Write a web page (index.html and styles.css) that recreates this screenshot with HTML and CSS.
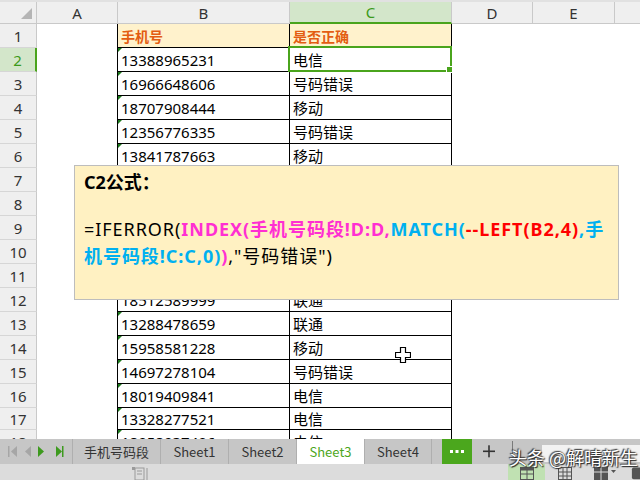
FILE: index.html
```html
<!DOCTYPE html>
<html>
<head>
<meta charset="utf-8">
<link rel="stylesheet" href="styles.css">
</head>
<body>
<div class="app">
  <div class="top"></div>
  <div class="sheet">
    <div class="row hdr">
      <div class="c rh corner"><span class="tri"></span></div>
      <div class="c a">A</div>
      <div class="c b">B</div>
      <div class="c cc sel-h">C</div>
      <div class="c d">D</div>
      <div class="c e">E</div>
      <div class="c f"></div>
    </div>
    <div class="row">
      <div class="c rh">1</div><div class="c a tl"></div>
      <div class="c b th">手机号</div><div class="c cc th">是否正确</div>
      <div class="c d"></div><div class="c e"></div><div class="c f"></div>
    </div>
    <div class="row">
      <div class="c rh sel-r">2</div><div class="c a tl"></div>
      <div class="c b num">13388965231</div><div class="c cc">电信</div>
      <div class="c d"></div><div class="c e"></div><div class="c f"></div>
    </div>
    <div class="row">
      <div class="c rh">3</div><div class="c a tl"></div>
      <div class="c b num">16966648606</div><div class="c cc">号码错误</div>
      <div class="c d"></div><div class="c e"></div><div class="c f"></div>
    </div>
    <div class="row">
      <div class="c rh">4</div><div class="c a tl"></div>
      <div class="c b num">18707908444</div><div class="c cc">移动</div>
      <div class="c d"></div><div class="c e"></div><div class="c f"></div>
    </div>
    <div class="row">
      <div class="c rh">5</div><div class="c a tl"></div>
      <div class="c b num">12356776335</div><div class="c cc">号码错误</div>
      <div class="c d"></div><div class="c e"></div><div class="c f"></div>
    </div>
    <div class="row">
      <div class="c rh">6</div><div class="c a tl"></div>
      <div class="c b num">13841787663</div><div class="c cc">移动</div>
      <div class="c d"></div><div class="c e"></div><div class="c f"></div>
    </div>
    <div class="row">
      <div class="c rh">7</div><div class="c a tl"></div>
      <div class="c b num">15537269061</div><div class="c cc">联通</div>
      <div class="c d"></div><div class="c e"></div><div class="c f"></div>
    </div>
    <div class="row">
      <div class="c rh">8</div><div class="c a tl"></div>
      <div class="c b num">13912378420</div><div class="c cc">移动</div>
      <div class="c d"></div><div class="c e"></div><div class="c f"></div>
    </div>
    <div class="row">
      <div class="c rh">9</div><div class="c a tl"></div>
      <div class="c b num">17755126398</div><div class="c cc">电信</div>
      <div class="c d"></div><div class="c e"></div><div class="c f"></div>
    </div>
    <div class="row">
      <div class="c rh">10</div><div class="c a tl"></div>
      <div class="c b num">11086342217</div><div class="c cc">号码错误</div>
      <div class="c d"></div><div class="c e"></div><div class="c f"></div>
    </div>
    <div class="row">
      <div class="c rh">11</div><div class="c a tl"></div>
      <div class="c b num">15623897415</div><div class="c cc">联通</div>
      <div class="c d"></div><div class="c e"></div><div class="c f"></div>
    </div>
    <div class="row">
      <div class="c rh">12</div><div class="c a tl"></div>
      <div class="c b num">18512589999</div><div class="c cc">联通</div>
      <div class="c d"></div><div class="c e"></div><div class="c f"></div>
    </div>
    <div class="row">
      <div class="c rh">13</div><div class="c a tl"></div>
      <div class="c b num">13288478659</div><div class="c cc">联通</div>
      <div class="c d"></div><div class="c e"></div><div class="c f"></div>
    </div>
    <div class="row">
      <div class="c rh">14</div><div class="c a tl"></div>
      <div class="c b num">15958581228</div><div class="c cc">移动</div>
      <div class="c d"></div><div class="c e"></div><div class="c f"></div>
    </div>
    <div class="row">
      <div class="c rh">15</div><div class="c a tl"></div>
      <div class="c b num">14697278104</div><div class="c cc">号码错误</div>
      <div class="c d"></div><div class="c e"></div><div class="c f"></div>
    </div>
    <div class="row">
      <div class="c rh">16</div><div class="c a tl"></div>
      <div class="c b num">18019409841</div><div class="c cc">电信</div>
      <div class="c d"></div><div class="c e"></div><div class="c f"></div>
    </div>
    <div class="row short">
      <div class="c rh">17</div><div class="c a tl"></div>
      <div class="c b num">13328277521</div><div class="c cc">电信</div>
      <div class="c d"></div><div class="c e"></div><div class="c f"></div>
    </div>
    <div class="row">
      <div class="c rh">18</div><div class="c a tl"></div>
      <div class="c b num">18958937406</div><div class="c cc">电信</div>
      <div class="c d"></div><div class="c e"></div><div class="c f"></div>
    </div>
  </div>

  <div class="tabbar">
    <div class="nav">
      <svg width="73" height="25" viewBox="0 0 73 25">
        <rect x="8" y="7" width="1.5" height="11" fill="#a6a6a6"/>
        <polygon points="17,7 17,18 11,12.5" fill="#a6a6a6"/>
        <polygon points="31,7 31,18 25,12.5" fill="#a6a6a6"/>
        <polygon points="38,7 38,18 44,12.5" fill="#3d9a1e"/>
        <polygon points="56,7 56,18 62,12.5" fill="#3d9a1e"/>
        <rect x="62" y="7" width="1.5" height="11" fill="#3d9a1e"/>
      </svg>
    </div>
    <div class="tab w88">手机号码段</div>
    <div class="tab w68">Sheet1</div>
    <div class="tab w68">Sheet2</div>
    <div class="tab w68 active">Sheet3</div>
    <div class="tab w67">Sheet4</div>
    <div class="more">
      <svg width="30" height="25" viewBox="0 0 30 25">
        <rect x="8" y="11" width="3" height="3" fill="#fff"/>
        <rect x="13.5" y="11" width="3" height="3" fill="#fff"/>
        <rect x="19" y="11" width="3" height="3" fill="#fff"/>
      </svg>
    </div>
    <div class="plus">
      <svg width="34" height="25" viewBox="0 0 34 25">
        <rect x="11" y="11.5" width="12" height="1.6" fill="#333"/>
        <rect x="16.2" y="6.3" width="1.6" height="12" fill="#333"/>
      </svg>
    </div>
    <div class="vsep"></div>
    <div class="scroll"></div>
  </div>
  <div class="status">
    <div class="st-doc">
      <svg width="18" height="16" viewBox="0 0 18 16">
        <rect x="2" y="3" width="3" height="3" fill="#9a9a9a"/>
        <rect x="5" y="4" width="9" height="12" fill="none" stroke="#9a9a9a"/>
        <line x1="7" y1="7" x2="12" y2="7" stroke="#9a9a9a"/>
        <line x1="7" y1="10" x2="12" y2="10" stroke="#9a9a9a"/>
        <line x1="17" y1="4" x2="17" y2="16" stroke="#9a9a9a"/>
      </svg>
    </div>
    <div class="st-right">
      <div class="st-on">
        <svg width="16" height="16" viewBox="0 0 16 16">
          <rect x="1.5" y="3.5" width="13" height="12" fill="none" stroke="#555"/>
          <rect x="1.5" y="3.5" width="13" height="3" fill="#555"/>
          <line x1="1" y1="10" x2="15" y2="10" stroke="#555"/>
          <line x1="8" y1="4" x2="8" y2="16" stroke="#555"/>
        </svg>
      </div>
      <div class="st-ic">
        <svg width="16" height="16" viewBox="0 0 16 16">
          <rect x="1.5" y="3.5" width="13" height="12" fill="none" stroke="#555"/>
          <line x1="6" y1="4" x2="6" y2="16" stroke="#555"/>
          <line x1="10" y1="4" x2="10" y2="16" stroke="#555"/>
          <line x1="1" y1="8" x2="15" y2="8" stroke="#555"/>
          <line x1="1" y1="12" x2="15" y2="12" stroke="#555"/>
        </svg>
      </div>
      <div class="st-ic wide">
        <svg width="24" height="16" viewBox="0 0 24 16">
          <rect x="1" y="3" width="14" height="13" fill="#555"/>
          <line x1="8" y1="3" x2="8" y2="16" stroke="#ddd"/>
          <line x1="1" y1="8" x2="15" y2="8" stroke="#ddd"/>
          <polygon points="18,6 23,6 20.5,9" fill="#555"/>
        </svg>
      </div>
      <div class="st-ic last">
        <svg width="10" height="16" viewBox="0 0 10 16">
          <rect x="1" y="3" width="12" height="13" rx="2" fill="#555"/>
        </svg>
      </div>
    </div>
  </div>

  <div class="selbox"><span class="handle"></span></div>

  <div class="popup">
    <div class="ptitle">C2公式：</div>
    <div class="formula"><span class="k">=IFERROR(</span><span class="m">INDEX(手机号码段!D:D,</span><span class="cy">MATCH(</span><span class="r">--LEFT(B2,4)</span><span class="cy">,手</span><br><span class="cy">机号码段!C:C,0)</span><span class="m">)</span><span class="k">,"号码错误")</span></div>
  </div>

  <svg class="cursor" width="16" height="16" viewBox="0 0 16 16">
    <polygon points="5.5,0.5 10.5,0.5 10.5,5.5 15.5,5.5 15.5,10.5 10.5,10.5 10.5,15.5 5.5,15.5 5.5,10.5 0.5,10.5 0.5,5.5 5.5,5.5" fill="#fff" stroke="#000" stroke-width="1.2"/>
  </svg>

  <div class="watermark">头条 @解晴新生</div>
</div>
</body>
</html>
```
FILE: styles.css
```css
html, body {
  margin: 0;
  padding: 0;
}
body {
  width: 640px;
  height: 480px;
  overflow: hidden;
  background: #fff;
  font-family: "Noto Sans", "Noto Sans CJK SC", sans-serif;
}
.app {
  position: relative;
  width: 640px;
  height: 480px;
  display: flex;
  flex-direction: column;
  overflow: hidden;
}
.top {
  height: 2px;
  flex: none;
  background: #e1e1e1;
}
.sheet {
  height: 437px;
  flex: none;
  overflow: hidden;
}
.row {
  display: flex;
  height: 24px;
}
.row.short {
  height: 22px;
}
.c {
  box-sizing: border-box;
  flex: none;
  height: 100%;
  display: flex;
  align-items: center;
  font-size: 15px;
  color: #000;
  white-space: nowrap;
  position: relative;
}
.rh {
  width: 37px;
  background: #efefef;
  border-right: 1px solid #c9c9c9;
  border-bottom: 1px solid #d6d6d6;
  justify-content: center;
  color: #333;
  font-size: 15px;
}
.a { width: 81px; }
.b { width: 172px; padding-left: 3px; border-right: 1px solid #000; border-bottom: 1px solid #000; }
.cc { width: 162px; padding-left: 3px; border-right: 1px solid #000; border-bottom: 1px solid #000; font-family: "Noto Sans CJK SC", sans-serif; }
.d { width: 81px; }
.e { width: 82px; }
.f { width: 40px; }
.tl { border-right: 1px solid #000; }

.hdr {
  height: 22px;
}
.hdr .c {
  background: #efefef;
  border-right: 1px solid #c9c9c9;
  border-bottom: 1px solid #c9c9c9;
  justify-content: center;
  color: #333;
  padding-left: 0;
  font-size: 15px;
  font-family: "Noto Sans", sans-serif;
}
.hdr .sel-h {
  background: #d3e6ca;
  color: #3c9a1a;
  border-bottom: 2px solid #4aa41c;
}
.corner .tri {
  position: absolute;
  left: 21px;
  top: 6px;
  width: 0;
  height: 0;
  border-left: 11px solid transparent;
  border-bottom: 11px solid #b5b5b5;
}
.rh.sel-r {
  background: #d3e6ca;
  color: #3c9a1a;
  border-right: 2px solid #4aa41c;
}
.th {
  background: #fff2cc;
  color: #e35d12;
  font-weight: bold;
  font-size: 14px;
  font-family: "Noto Sans CJK SC", sans-serif;
}
.num::before {
  content: "";
  position: absolute;
  left: 0;
  top: 0;
  width: 0;
  height: 0;
  border-top: 4px solid #1e7b1e;
  border-right: 4px solid transparent;
}

.tabbar {
  height: 25px;
  flex: none;
  display: flex;
  align-items: stretch;
  background: #c6c6c6;
}
.nav {
  width: 73px;
  flex: none;
  box-sizing: border-box;
  border-right: 1px solid #afafaf;
}
.nav svg, .more svg, .plus svg { display: block; }
.tab {
  box-sizing: border-box;
  flex: none;
  display: flex;
  align-items: center;
  justify-content: center;
  border-right: 1px solid #afafaf;
  font-size: 13px;
  color: #333;
  font-family: "Noto Sans CJK SC", sans-serif;
}
.w88 { width: 88px; }
.w68 { width: 68px; }
.w67 { width: 67px; }
.tab.active {
  background: #fff;
  color: #4ca61b;
}
.more {
  margin-left: 10px;
  width: 30px;
  flex: none;
  background: #4ba71d;
}
.plus {
  width: 34px;
  flex: none;
}
.vsep {
  width: 1px;
  margin: 2px 0 8px 6px;
  background: #7a7a7a;
  flex: none;
}
.scroll {
  margin: 6px 0 2px 29px;
  flex: 1;
  background: #f2f2f2;
}
.status {
  height: 16px;
  flex: none;
  background: #dcdcdc;
  display: flex;
  align-items: stretch;
}
.st-doc {
  margin-left: 130px;
  width: 18px;
}
.st-doc svg, .st-right svg { display: block; }
.st-right {
  margin-left: auto;
  display: flex;
  align-items: stretch;
}
.st-on {
  width: 37px;
  background: #c0e1b2;
  display: flex;
  justify-content: center;
}
.st-ic {
  margin-left: 12px;
  width: 16px;
  display: flex;
  justify-content: center;
}
.st-ic.wide {
  margin-left: 20px;
  width: 24px;
}
.st-ic.last {
  margin-left: 14px;
  width: 9px;
  overflow: hidden;
}

.selbox {
  position: absolute;
  left: 288px;
  top: 46px;
  width: 164px;
  height: 26px;
  box-sizing: border-box;
  border: 2px solid #4aa41c;
}
.handle {
  position: absolute;
  right: -3px;
  bottom: -3px;
  width: 5px;
  height: 5px;
  background: #4aa41c;
  border: 1px solid #fff;
}

.popup {
  position: absolute;
  left: 74px;
  top: 165px;
  width: 545px;
  height: 135px;
  box-sizing: border-box;
  background: #fff1c2;
  border: 1px solid #bdbdbd;
  padding: 3px 0 0 9px;
  font-size: 18px;
  line-height: 27px;
  color: #000;
  font-family: "Noto Sans", "Noto Sans CJK SC", sans-serif;
}
.ptitle {
  font-weight: bold;
  margin-bottom: 20px;
}
.formula {
  white-space: nowrap;
  letter-spacing: 0.95px;
}
.formula .k { font-weight: normal; color: #000; }
.formula .m { font-weight: bold; color: #ff2fd2; }
.formula .cy { font-weight: bold; color: #00b0f0; }
.formula .r { font-weight: bold; color: #ff0000; }

.cursor {
  position: absolute;
  left: 395px;
  top: 347px;
}
.watermark {
  position: absolute;
  left: 509px;
  top: 445px;
  font-size: 18px;
  line-height: 24px;
  color: #fff;
  white-space: nowrap;
  font-family: "Noto Sans CJK SC", sans-serif;
  text-shadow: 0 0 2px #333, 1px 1px 1px #222, -1px -1px 1px #444;
}
```
